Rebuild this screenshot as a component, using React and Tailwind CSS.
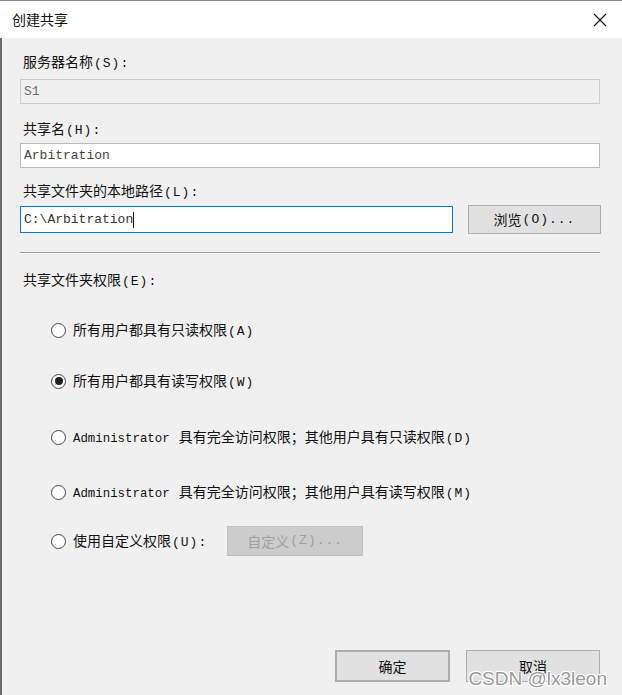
import React from 'react';

const cjk = { fontFamily: '"Noto Sans CJK SC", "Noto Sans", sans-serif' };
const mono = { fontFamily: '"Liberation Mono", "Noto Sans CJK SC", monospace' };

// the (S) / (A) style access keys render in a monospace-ish face
function Key({ children }) {
  return (
    <span className="text-[13px] tracking-[1px] ml-[1px]" style={mono}>
      {children}
    </span>
  );
}

function Radio({ checked, children, className = '' }) {
  return (
    <label className={`flex items-center h-[24px] pl-[31px] ${className}`}>
      <span className="w-[15px] h-[15px] rounded-full border border-[#444] bg-white flex items-center justify-center shrink-0">
        {checked && <span className="w-[8px] h-[8px] rounded-full bg-[#222]" />}
      </span>
      <span className="ml-[7px] text-[14px] text-[#111] whitespace-nowrap">{children}</span>
    </label>
  );
}

function Btn({ children, className = '' }) {
  return (
    <button
      type="button"
      className={`bg-[#e1e1e1] border border-[#adadad] text-[14px] text-[#111] flex items-center justify-center ${className}`}
    >
      {children}
    </button>
  );
}

export default function App() {
  return (
    <div className="w-[622px] h-[695px] bg-[#f0f0f0] flex flex-col relative overflow-hidden" style={cjk}>
      {/* title bar */}
      <div className="h-[38px] bg-white border-t border-[#8a8a8a] flex items-center justify-between pl-[12px] pr-[15px] shrink-0">
        <span className="text-[14px] text-[#111]">创建共享</span>
        <svg width="14" height="14" viewBox="0 0 14 14" className="mt-[1px]">
          <path d="M1 1 L13 13 M13 1 L1 13" stroke="#111" strokeWidth="1.1" fill="none" />
        </svg>
      </div>

      {/* body */}
      <div className="flex-1 flex flex-col border-l-2 border-[#6a6a6a] pl-[18px] pr-[20px]">
        <div className="mt-[13px] h-[20px] leading-[20px] pl-[3px] text-[14px] text-[#111]">
          服务器名称<Key>(S):</Key>
        </div>
        <div className="mt-[8px] h-[25px] w-[580px] border border-[#cccccc] bg-[#f0f0f0] flex items-center pl-[3px] text-[13px] text-[#6d6d6d]" style={mono}>
          S1
        </div>

        <div className="mt-[14px] h-[20px] leading-[20px] pl-[3px] text-[14px] text-[#111]">
          共享名<Key>(H):</Key>
        </div>
        <div className="mt-[5px] h-[25px] w-[580px] border border-[#b9b9b9] bg-white flex items-center pl-[3px] text-[13px] text-[#444]" style={mono}>
          Arbitration
        </div>

        <div className="mt-[12px] h-[20px] leading-[20px] pl-[3px] text-[14px] text-[#111]">
          共享文件夹的本地路径<Key>(L):</Key>
        </div>
        <div className="mt-[5px] flex items-center">
          <div className="h-[27px] w-[433px] border border-[#0078d7] bg-white flex items-center pl-[3px] text-[13px] text-[#333]" style={mono}>
            C:\Arbitration<span className="inline-block w-[1px] h-[16px] bg-[#111]" />
          </div>
          <Btn className="ml-[15px] w-[133px] h-[29px]">
            浏览<Key>(O)...</Key>
          </Btn>
        </div>

        <div className="mt-[18px] h-[2px] w-[580px] bg-[#a0a0a0] border-b border-white" />

        <div className="mt-[15px] h-[20px] leading-[20px] pl-[3px] text-[14px] text-[#111]">
          共享文件夹权限<Key>(E):</Key>
        </div>

        <Radio className="mt-[29px]">
          所有用户都具有只读权限<Key>(A)</Key>
        </Radio>
        <Radio className="mt-[27px]" checked>
          所有用户都具有读写权限<Key>(W)</Key>
        </Radio>
        <Radio className="mt-[32px]">
          <span className="text-[12.4px] mr-[9px]" style={mono}>Administrator</span>具有完全访问权限；其他用户具有只读权限<Key>(D)</Key>
        </Radio>
        <Radio className="mt-[31px]">
          <span className="text-[12.4px] mr-[9px]" style={mono}>Administrator</span>具有完全访问权限；其他用户具有读写权限<Key>(M)</Key>
        </Radio>
        <div className="mt-[22px] flex items-center">
          <Radio>
            使用自定义权限<Key>(U):</Key>
          </Radio>
          <button
            type="button"
            className="ml-[20px] w-[136px] h-[30px] bg-[#cccccc] border border-[#bfbfbf] text-[14px] text-[#a0a0a0] flex items-center justify-center"
          >
            自定义<Key>(Z)...</Key>
          </button>
        </div>

        <div className="mt-auto mb-[13px] flex justify-end pr-[2px]">
          <Btn className="w-[115px] h-[32px] border-2 border-[#0078d7]">确定</Btn>
          <Btn className="ml-[16px] w-[134px] h-[32px]">取消</Btn>
        </div>
      </div>

      <div
        className="absolute right-[15px] bottom-[6px] text-[19px] leading-[20px] text-[#9a9a9a]"
        style={{
          fontFamily: '"Liberation Sans", sans-serif',
          textShadow: '1px 1px 0 #fff, -1px -1px 0 #fff, 1px -1px 0 #fff, -1px 1px 0 #fff',
        }}
      >
        CSDN @lx3leon
      </div>
    </div>
  );
}
